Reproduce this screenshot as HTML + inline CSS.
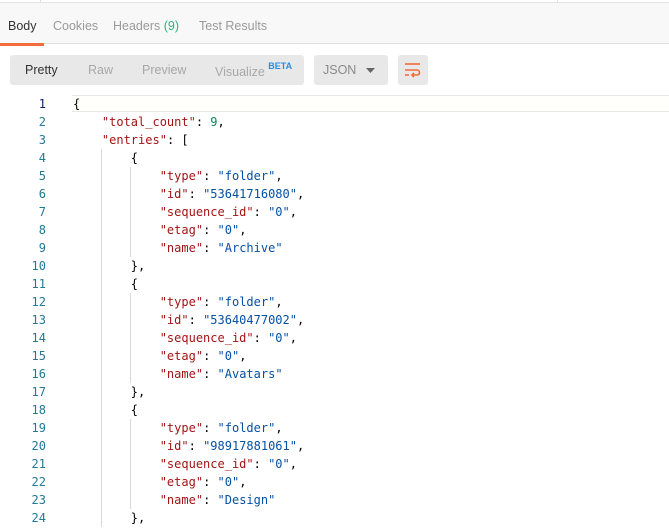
<!DOCTYPE html>
<html><head><style>
*{margin:0;padding:0;box-sizing:border-box}
body{width:669px;height:529px;overflow:hidden;background:#fff;font-family:"Liberation Sans",sans-serif;position:relative}
.top{position:absolute;left:0;top:0;width:669px;height:3px;border-bottom:1px solid #e4e4e4}
.vl{position:absolute;top:0;height:3px;width:1px;background:#e0e0e0}
.tabs{position:absolute;left:0;top:3px;width:669px;height:41px;background:#f8f8f8;border-bottom:1px solid #e2e2e2}
.tab{position:absolute;top:16px;font-size:12.5px;color:#9a9a9a}
.ul{position:absolute;left:0;top:40px;width:44px;height:3px;background:#f26b3a}
.grp{position:absolute;left:10px;top:55px;width:294px;height:30px;background:#e8e8e8;border-radius:3px}
.b{position:absolute;top:8px;font-size:12.5px;color:#a8a8a8}
.json{position:absolute;left:314px;top:55px;width:74px;height:30px;background:#e8e8e8;border-radius:3px}
.wrap{position:absolute;left:398px;top:55px;width:30px;height:30px;background:#e8e8e8;border-radius:3px}
.active{position:absolute;left:72px;top:95px;width:600px;height:17px;background:#fffffb;border-top:1px solid #e8e8e8;border-bottom:1px solid #e8e8e8}
.code{position:absolute;left:0;top:95px;font-family:"DejaVu Sans Mono","Liberation Mono",monospace;font-size:12px;line-height:18px}
.ln{position:absolute;left:0;width:46px;text-align:right;color:#237893}
.c{position:absolute;left:73px;white-space:pre;color:#000}
.k{color:#a31515}.s{color:#0451a5}.n{color:#098658}
.g{position:absolute;width:1px;background:#d8d8d8}
</style></head><body>
<div class="top"></div><div class="vl" style="left:40px"></div><div class="vl" style="left:557px"></div>
<div class="tabs">
<span class="tab" style="left:8px;color:#333">Body</span>
<span class="tab" style="left:53px">Cookies</span>
<span class="tab" style="left:113px">Headers <span style="color:#26b47f">(9)</span></span>
<span class="tab" style="left:199px">Test Results</span>
<div class="ul"></div>
</div>
<div class="grp">
<span class="b" style="left:15px;color:#333">Pretty</span>
<span class="b" style="left:78px">Raw</span>
<span class="b" style="left:132px">Preview</span>
<span class="b" style="left:205px">Visualize <sup style="color:#2a8ce0;font-size:9px;font-weight:bold;position:relative;top:-2px">BETA</sup></span>
</div>
<div class="json"><span class="b" style="left:9px;color:#8a8a8a">JSON</span>
<svg style="position:absolute;left:52px;top:13px" width="9" height="5"><path d="M0 0H9L4.5 5Z" fill="#666"/></svg></div>
<div class="wrap"><svg style="position:absolute;left:6px;top:7px" width="18" height="16" fill="none" stroke="#f26b3a" stroke-width="1.6">
<path d="M1 2H16"/><path d="M1 8H13a2.5 2.5 0 0 1 0 5H8"/><path d="M10 11l-2 2 2 2"/><path d="M1 13H5"/></svg></div>
<div class="active"></div>
<div class="g" style="left:101px;top:149px;height:378px"></div>
<div class="g" style="left:130px;top:167px;height:90px"></div>
<div class="g" style="left:130px;top:293px;height:90px"></div>
<div class="g" style="left:130px;top:419px;height:90px"></div>
<div class="code">
<div class="ln" style="top:0;color:#0b216f">1</div><div class="ln" style="top:18px">2</div><div class="ln" style="top:36px">3</div><div class="ln" style="top:54px">4</div><div class="ln" style="top:72px">5</div><div class="ln" style="top:90px">6</div><div class="ln" style="top:108px">7</div><div class="ln" style="top:126px">8</div><div class="ln" style="top:144px">9</div><div class="ln" style="top:162px">10</div><div class="ln" style="top:180px">11</div><div class="ln" style="top:198px">12</div><div class="ln" style="top:216px">13</div><div class="ln" style="top:234px">14</div><div class="ln" style="top:252px">15</div><div class="ln" style="top:270px">16</div><div class="ln" style="top:288px">17</div><div class="ln" style="top:306px">18</div><div class="ln" style="top:324px">19</div><div class="ln" style="top:342px">20</div><div class="ln" style="top:360px">21</div><div class="ln" style="top:378px">22</div><div class="ln" style="top:396px">23</div><div class="ln" style="top:414px">24</div>
<div class="c">{
    <span class="k">"total_count"</span>: <span class="n">9</span>,
    <span class="k">"entries"</span>: [
        {
            <span class="k">"type"</span>: <span class="s">"folder"</span>,
            <span class="k">"id"</span>: <span class="s">"53641716080"</span>,
            <span class="k">"sequence_id"</span>: <span class="s">"0"</span>,
            <span class="k">"etag"</span>: <span class="s">"0"</span>,
            <span class="k">"name"</span>: <span class="s">"Archive"</span>
        },
        {
            <span class="k">"type"</span>: <span class="s">"folder"</span>,
            <span class="k">"id"</span>: <span class="s">"53640477002"</span>,
            <span class="k">"sequence_id"</span>: <span class="s">"0"</span>,
            <span class="k">"etag"</span>: <span class="s">"0"</span>,
            <span class="k">"name"</span>: <span class="s">"Avatars"</span>
        },
        {
            <span class="k">"type"</span>: <span class="s">"folder"</span>,
            <span class="k">"id"</span>: <span class="s">"98917881061"</span>,
            <span class="k">"sequence_id"</span>: <span class="s">"0"</span>,
            <span class="k">"etag"</span>: <span class="s">"0"</span>,
            <span class="k">"name"</span>: <span class="s">"Design"</span>
        },</div>
</div>
</body></html>
